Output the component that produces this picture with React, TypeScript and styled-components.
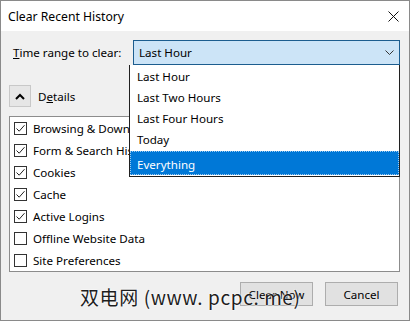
import React from 'react';
import styled, { createGlobalStyle } from 'styled-components';

const Global = createGlobalStyle`
  html, body { margin: 0; padding: 0; background: #ffffff; }
  body { font-family: "Noto Sans", "Open Sans", sans-serif; font-size: 11.6px; color: #000; }
`;

const Window = styled.div`
  position: relative;
  width: 410px;
  height: 321px;
  box-sizing: border-box;
  border: 1px solid #8a8a8a;
  background: #f0f0f0;
  display: flex;
  flex-direction: column;
  overflow: hidden;
`;

const TitleBar = styled.div`
  height: 30px;
  background: #ffffff;
  display: flex;
  align-items: center;
  justify-content: space-between;
  padding: 0 10px 0 7px;
  font-size: 12.2px;
`;

const Body = styled.div`
  flex: 1;
  display: flex;
  flex-direction: column;
  padding: 9px 9px 0 8px;
`;

const RangeRow = styled.div`
  position: relative;
  display: flex;
  align-items: center;
  height: 25px;
`;

const Label = styled.span`
  width: 120px;
  padding-left: 4px;
`;

const Select = styled.div`
  flex: 1;
  height: 25px;
  box-sizing: border-box;
  border: 1px solid #1c5d8f;
  background: #cce4f7;
  display: flex;
  align-items: center;
  justify-content: space-between;
  padding: 0 5px 0 5px;
`;

const Dropdown = styled.ul`
  position: absolute;
  z-index: 2;
  top: 25px;
  left: 120px;
  right: 0;
  margin: 0;
  padding: 0 0 1px 0;
  list-style: none;
  background: #ffffff;
  border: 1px solid #202020;
  border-top: none;
`;

const Option = styled.li<{ $active?: boolean; $tall?: boolean }>`
  height: ${(p) => (p.$tall ? 24 : 21)}px;
  margin-top: ${(p) => (p.$tall ? 2 : 0)}px;
  box-sizing: border-box;
  display: flex;
  align-items: center;
  padding: ${(p) => (p.$tall ? 3 : 2)}px 0 0 6px;
  background: ${(p) => (p.$active ? '#0078d7' : 'transparent')};
  color: ${(p) => (p.$active ? '#ffffff' : '#000000')};
  border: 1px dotted ${(p) => (p.$active ? '#9ccaf0' : 'transparent')};
`;

const DetailsRow = styled.div`
  display: flex;
  align-items: center;
  gap: 7px;
  margin-top: 20px;
  height: 22px;
`;

const SquareButton = styled.div`
  width: 22px;
  height: 22px;
  box-sizing: border-box;
  border: 1px solid #c8c8c8;
  background: #e6e6e6;
  display: flex;
  align-items: center;
  justify-content: center;
`;

const GroupBox = styled.div`
  margin-top: 9px;
  background: #ffffff;
  border: 1px solid #8c8c8c;
  display: flex;
  flex-direction: column;
`;

const CheckRow = styled.label`
  height: 22px;
  display: flex;
  align-items: center;
  gap: 6px;
  padding-left: 4px;
`;

const Box = styled.span`
  width: 13px;
  height: 13px;
  box-sizing: border-box;
  border: 1px solid #333333;
  background: #ffffff;
  display: flex;
  align-items: center;
  justify-content: center;
`;

const Footer = styled.div`
  display: flex;
  justify-content: flex-end;
  gap: 12px;
  margin-top: 10px;
  padding-right: 2px;
`;

const Button = styled.div`
  width: 73px;
  height: 24px;
  box-sizing: border-box;
  border: 1px solid #adadad;
  background: #e1e1e1;
  display: flex;
  align-items: center;
  justify-content: center;
`;

const Watermark = styled.div`
  position: absolute;
  z-index: 3;
  left: 79px;
  top: 282px;
  font-family: "Noto Sans CJK SC", "Noto Sans", sans-serif;
  font-size: 19px;
  color: #1e1e1e;
  letter-spacing: 0.6px;
  text-shadow: 0 0 2px #ffffff, 0 0 2px #ffffff;
  white-space: nowrap;
`;

const checks: [string, boolean][] = [
  ['Browsing & Download History', true],
  ['Form & Search History', true],
  ['Cookies', true],
  ['Cache', true],
  ['Active Logins', true],
  ['Offline Website Data', false],
  ['Site Preferences', false],
];

const options = ['Last Hour', 'Last Two Hours', 'Last Four Hours', 'Today'];

export default function App() {
  return (
    <Window>
      <Global />
      <TitleBar>
        <span>Clear Recent History</span>
        <svg width="11" height="11" viewBox="0 0 11 11">
          <path d="M0.5 0.5 L10.5 10.5 M10.5 0.5 L0.5 10.5" stroke="#111" strokeWidth="1" />
        </svg>
      </TitleBar>
      <Body>
        <RangeRow>
          <Label>
            <u>T</u>ime range to clear:
          </Label>
          <Select>
            <span>Last Hour</span>
            <svg width="9" height="6" viewBox="0 0 9 6">
              <path d="M0.5 0.5 L4.5 4.5 L8.5 0.5" fill="none" stroke="#333" strokeWidth="1" />
            </svg>
          </Select>
          <Dropdown>
            {options.map((o) => (
              <Option key={o}>{o}</Option>
            ))}
            <Option $active $tall>
              Everything
            </Option>
          </Dropdown>
        </RangeRow>
        <DetailsRow>
          <SquareButton>
            <svg width="10" height="7" viewBox="0 0 10 7">
              <path d="M1 6 L5 2 L9 6" fill="none" stroke="#000" strokeWidth="2" />
            </svg>
          </SquareButton>
          <span>
            D<u>e</u>tails
          </span>
        </DetailsRow>
        <GroupBox>
          {checks.map(([name, on]) => (
            <CheckRow key={name}>
              <Box>
                {on && (
                  <svg width="11" height="11" viewBox="0 0 11 11">
                    <path d="M1.5 5.5 L4.2 8.2 L9.5 2.2" fill="none" stroke="#222" strokeWidth="1" />
                  </svg>
                )}
              </Box>
              <span>{name}</span>
            </CheckRow>
          ))}
        </GroupBox>
        <Footer>
          <Button>Clear Now</Button>
          <Button>Cancel</Button>
        </Footer>
      </Body>
      <Watermark>双电网 (www. pcpc. me)</Watermark>
    </Window>
  );
}
